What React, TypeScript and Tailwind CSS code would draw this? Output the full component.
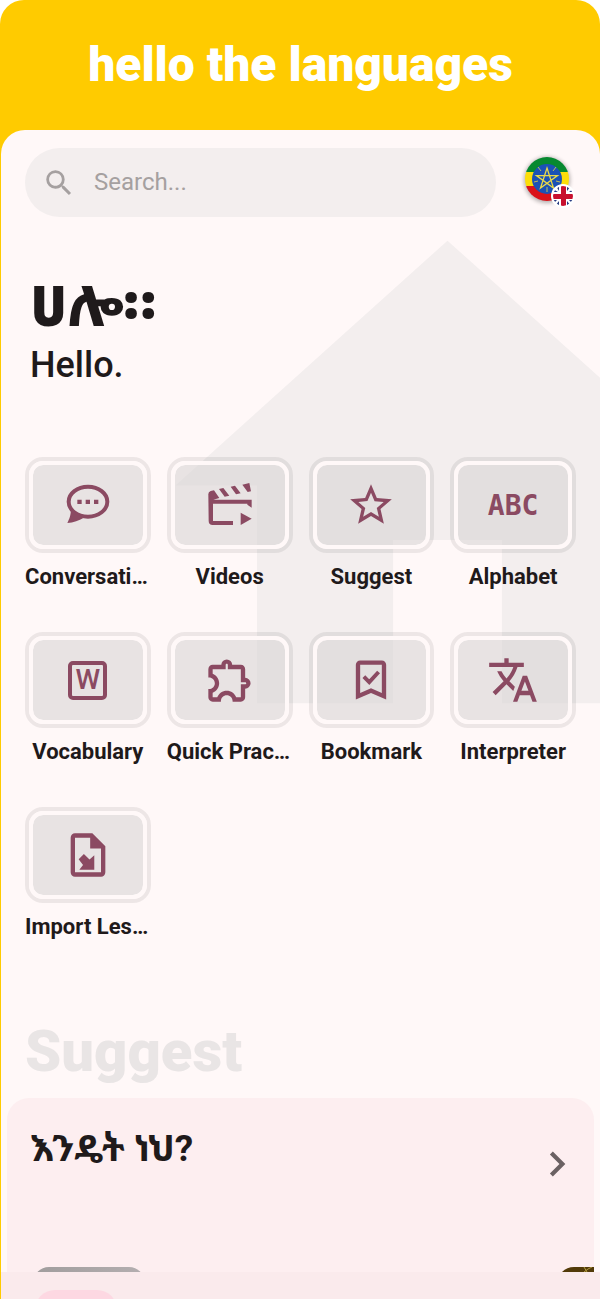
import type { ReactNode } from 'react';
import {
  MdChevronRight,
  MdOutlineExtension,
  MdSearch,
  MdStarOutline,
  MdTranslate,
} from 'react-icons/md';

interface MenuItem {
  label: string;
  icon: ReactNode;
}

function ChatIcon() {
  return (
    <svg viewBox="185 120 156 156" className="w-[52px] h-[52px]" fill="currentColor">
      <ellipse cx="263" cy="188" rx="58" ry="45" fill="none" stroke="currentColor" strokeWidth="12" />
      <path d="M211 210c2 15-4 30-10 42 18-1 36-7 48-15l-12-10-14-10z" />
      <path d="M231 182h13v13h-13zM256 182h13v13h-13zM281 182h13v13h-13z" />
    </svg>
  );
}

function VideoIcon() {
  return (
    <svg viewBox="610 120 156 156" className="w-[52px] h-[52px]" fill="currentColor">
      <path d="M623 168q-1-9 7-12l10-2 16 23-18 5h115v24l-13-9v-3h-103v52h60v12h-61q-12 0-12-12z" />
      <path d="M655 150l13-3 18 23-14 3zM690 143l13-3 17 23-14 3zM725 137l21-5 5 25-10 2z" />
      <path d="M720 221l33 18-33 19z" />
    </svg>
  );
}

function BookmarkIcon() {
  return (
    <svg viewBox="0 0 24 24" className="w-[52px] h-[52px]" fill="currentColor">
      <path d="M17 18l-5-2.180L7 18V5h10v13zm0-15H7a2 2 0 0 0-2 2v16l7-3 7 3V5a2 2 0 0 0-2-2z" />
      <path d="M8.700 10.400l2.500 2.600 4.300-4.700" fill="none" stroke="currentColor" strokeWidth="1.800" />
    </svg>
  );
}

function ImportIcon() {
  return (
    <svg viewBox="0 0 24 24" className="w-[52px] h-[52px]" fill="currentColor">
      <path d="M14 2H6a2 2 0 0 0-2 2v16a2 2 0 0 0 2 2h12a2 2 0 0 0 2-2V8l-6-6zm4 18H6V4h7v5h5v11z" />
      <path d="M10.100 11.500l-2.400 2.500 2 2.600-1.700 2.200h6.900v-6.700l-2.200 2z" />
    </svg>
  );
}

const items: MenuItem[] = [
  { label: 'Conversation', icon: <ChatIcon /> },
  { label: 'Videos', icon: <VideoIcon /> },
  { label: 'Suggest', icon: <MdStarOutline className="w-[50px] h-[50px]" /> },
  {
    label: 'Alphabet',
    icon: <span className="font-['DejaVu_Sans_Mono',monospace] pt-0.5 text-[28px] leading-8 font-bold">ABC</span>,
  },
  {
    label: 'Vocabulary',
    icon: (
      <span className="flex items-center justify-center w-[39px] h-[39px] rounded-[5px] border-4 border-current text-[28px] leading-8 font-medium">
        W
      </span>
    ),
  },
  { label: 'Quick Practice', icon: <MdOutlineExtension className="w-[52px] h-[52px]" /> },
  { label: 'Bookmark', icon: <BookmarkIcon /> },
  { label: 'Interpreter', icon: <MdTranslate className="w-[52px] h-[52px]" /> },
  { label: 'Import Lesson', icon: <ImportIcon /> },
];

function MenuButton({ label, icon }: MenuItem) {
  return (
    <button className="min-w-0 flex flex-col">
      <span className="w-full h-24 rounded-[18px] border-4 border-black/7">
        <span className="w-full h-full flex items-center justify-center rounded-[14px] border-4 border-[#fff8f8] bg-[#d8d5d5]/60 bg-clip-padding text-[#8b4a62]">
          {icon}
        </span>
      </span>
      <span className="w-full mt-2.5 truncate text-center text-[22px] leading-7 font-bold">{label}</span>
    </button>
  );
}

function FlagBadge() {
  return (
    <svg viewBox="0 0 60 60" className="w-15 h-15">
      <defs>
        <clipPath id="ethiopia">
          <circle cx="27" cy="27" r="22" />
        </clipPath>
        <clipPath id="britain">
          <circle cx="43" cy="44" r="10" />
        </clipPath>
        <filter id="shadow" x="-30%" y="-30%" width="160%" height="160%">
          <feGaussianBlur stdDeviation="2" />
        </filter>
      </defs>
      <circle cx="27" cy="28" r="23" fill="#000" opacity="0.3" filter="url(#shadow)" />
      <g clipPath="url(#ethiopia)">
        <path d="M0 0h60v20H0z" fill="#078930" />
        <path d="M0 20h60v14H0z" fill="#fcdd09" />
        <path d="M0 34h60v26H0z" fill="#da121a" />
        <circle cx="27" cy="27" r="15" fill="#1b52b5" />
        <g fill="none" stroke="#e8d94a">
          <path d="M27 16l6.500 20-17-12.400h21L20.500 36z" strokeWidth="1.300" />
          <path d="M33 19l3-4M21 19l-3-4M36 29l4 1M18 29l-4 1M27 35v5" strokeWidth="0.800" />
        </g>
      </g>
      <circle cx="43" cy="44" r="12" fill="#fff" />
      <g clipPath="url(#britain)">
        <path d="M32 33h22v22H32z" fill="#fff" />
        <path d="M36 34h3v5zM47 34h4l-4 5zM33 37l5 3h-5zM53 37v3h-4zM33 48h4l-4 4zM49 48h4v4zM39 49v5h-4zM47 49l4 5h-4z" fill="#273b83" />
        <path d="M41 33h5v9h9v5h-9v9h-5v-9h-9v-5h9z" fill="#c8102e" />
      </g>
    </svg>
  );
}

export default function App() {
  return (
    <div className="bg-white font-[Roboto,'Noto_Sans_Ethiopic','Noto_Sans',sans-serif] text-[#1f1a1b]">
      <div className="rounded-t-3xl bg-[#ffcb00] pl-px">
        <header className="flex h-[130px] items-center justify-center">
          <h1 className="text-5xl leading-14 font-black text-white">hello the languages</h1>
        </header>

        <div className="relative overflow-hidden rounded-t-3xl bg-[#fff8f8]">
          {/* house backdrop behind the menu */}
          <svg viewBox="0 0 24 24" className="absolute left-[120px] top-[29px] w-[653px] h-[653px]" fill="#f3eeee">
            <path d="M10 20v-6h4v6h5v-8h3L12 3 2 12h3v8z" />
          </svg>

          <main className="relative">
            <div className="flex items-center gap-6 pt-[18px] pl-6 pr-5">
              <label className="flex h-[69px] flex-1 items-center gap-[18px] rounded-full bg-[#f3eeee] pl-[17px] pr-6">
                <MdSearch className="w-[34px] h-[34px] text-[#a5a0a0]" />
                <input
                  type="search"
                  aria-label="Search"
                  placeholder="Search..."
                  className="min-w-0 flex-1 bg-transparent pb-0.5 text-2xl outline-none placeholder:text-[#a5a0a0]"
                />
              </label>
              <button aria-label="Change language" className="pb-0.5">
                <FlagBadge />
              </button>
            </div>

            <section className="px-[29px] pt-[52px]">
              <h2 className="text-[56px] leading-[76px] font-black">ሀሎ።</h2>
              <p className="text-4xl leading-10 font-medium">Hello.</p>
            </section>

            <nav className="grid grid-cols-4 gap-x-4 gap-y-[41px] px-6 pt-[72px]">
              {items.map((item) => (
                <MenuButton key={item.label} {...item} />
              ))}
            </nav>

            <section className="pt-[76px]">
              <h2 className="px-6 text-[58px] leading-[68px] font-black text-[#e9e5e5]">Suggest</h2>
              <div className="mx-1.5 mt-[13px] overflow-hidden rounded-t-[22px] bg-[#fdeef0]">
                <div className="flex h-[169px] items-start justify-between pt-[31px] pl-[23px] pr-3">
                  <h3 className="text-[37px] leading-10 font-bold">እንዴት ነህ?</h3>
                  <button aria-label="Open lesson" className="pt-[10px]">
                    <MdChevronRight className="w-[50px] h-[50px] text-[#6b6163]" />
                  </button>
                </div>
                <div className="flex h-[5px] justify-between overflow-hidden pl-[26px]">
                  <div className="h-20 w-[112px] rounded-2xl bg-linear-to-r from-[#a09d9d] to-[#b4aeb0]" />
                  <svg viewBox="0 0 35 5" className="w-[35px] h-[5px]">
                    <path d="M3 5Q8 0 15 0h20v5z" fill="#523a08" />
                    <path d="M25 5l4-3 4-2M25 0l3 5" fill="none" stroke="#b09a3e" />
                  </svg>
                </div>
              </div>
            </section>
          </main>

          <footer className="relative flex h-[27px] overflow-hidden bg-[#faeaec] pt-[18px] pl-[34px]">
            <div className="h-10 w-[82px] rounded-full bg-[#fdd8e2]" />
          </footer>
        </div>
      </div>
    </div>
  );
}
